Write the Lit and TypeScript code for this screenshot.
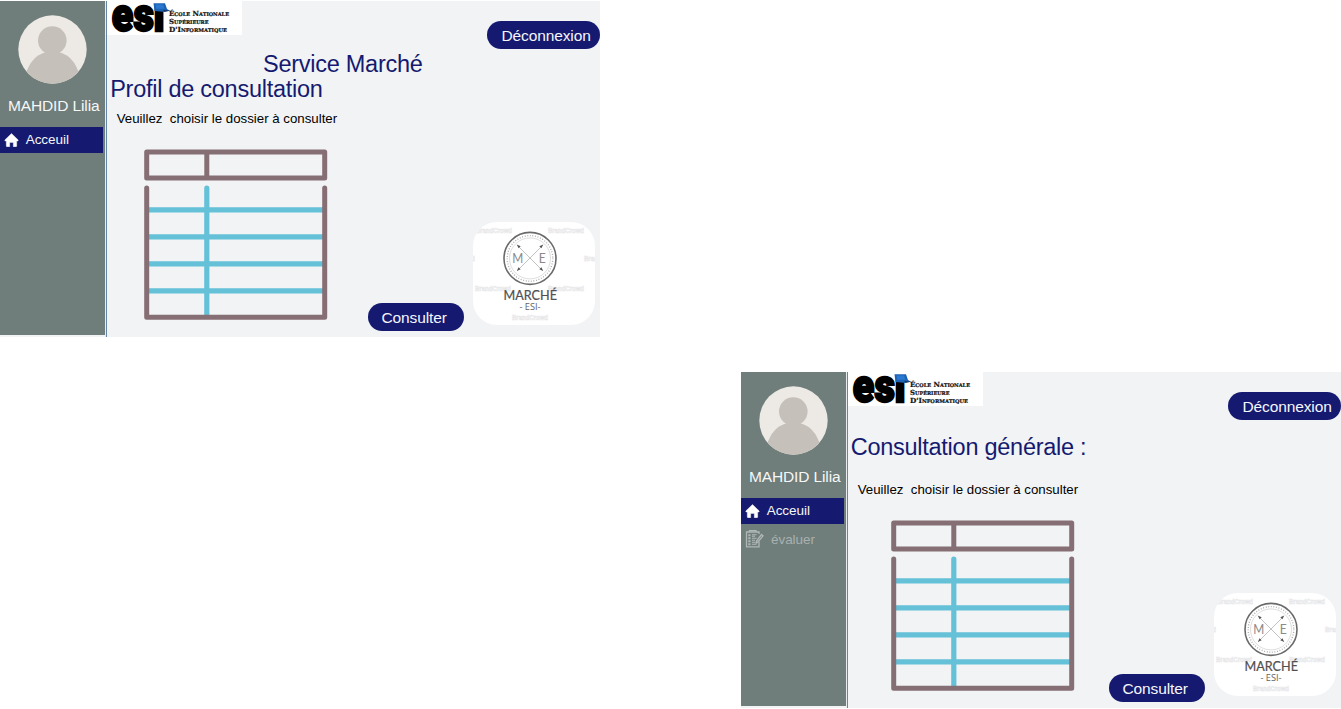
import { LitElement, html, css, svg, nothing } from "lit";
import { customElement, property } from "lit/decorators.js";

@customElement("esi-logo")
class EsiLogo extends LitElement {
  static styles = css`
    :host { display: block; width: 135px; height: 34.5px; background: #fff; }
    svg { display: block; }
    .big { font: 900 30px Roboto, "Liberation Sans", sans-serif; stroke: #000; stroke-width: 1.5; stroke-linejoin: miter; }
    .small { font: bold 7px "DejaVu Serif", "Liberation Serif", serif; font-variant: small-caps; fill: #111; stroke: #111; stroke-width: 0.2; }
  `;
  render() {
    return html`<svg width="135" height="34.5" viewBox="0 0 135 34.5">
      <g transform="translate(4.8 29.6) scale(1 1.56)">
        <text class="big" x="0" y="0" textLength="21.5" lengthAdjust="spacingAndGlyphs">e</text>
        <text class="big" x="21.7" y="0" textLength="20.5" lengthAdjust="spacingAndGlyphs">s</text>
        <text class="big" x="41.5" y="0" textLength="11.5" lengthAdjust="spacingAndGlyphs">ı</text>
      </g>
      <path d="M46.500 2.200h11.500l2 5.700 3 1.800-6.800 1.100-8.700-.900z" fill="#1c62b5" />
      <path d="M48.500 3.500h7.600l1.300 4.200h-8.200z" fill="#2a78cf" />
      <path d="M56.500 8.800l6.500.900-6.300 1.200z" fill="#143761" />
      <text class="small" x="62" y="15" textLength="60" lengthAdjust="spacingAndGlyphs">École Nationale</text>
      <text class="small" x="62" y="22.8" textLength="39.5" lengthAdjust="spacingAndGlyphs">Supérieure</text>
      <text class="small" x="62" y="30.6" textLength="58" lengthAdjust="spacingAndGlyphs">D'Informatique</text>
    </svg>`;
  }
}

@customElement("marche-logo")
class MarcheLogo extends LitElement {
  static styles = css`
    :host { display: block; width: 122px; height: 103.5px; border-radius: 24px; overflow: hidden; background: #fff; }
    svg { display: block; }
    text { font-family: Lato, "Open Sans", sans-serif; }
    .mark { font: bold 7px "Liberation Sans", sans-serif; fill: #fff; stroke: #e6e6e8; stroke-width: 0.6; }
    .letter { font-size: 12.5px; fill: #8a8a8a; }
    .name { font-size: 12.6px; fill: #505050; stroke: #505050; stroke-width: 0.2; }
    .sub { font: 8.8px "Open Sans", sans-serif; fill: #626262; }
  `;
  render() {
    const marks = [[3, 11.3], [75, 11.3], [-34, 39], [111, 39], [2, 69], [75, 69], [39, 97.5]];
    const heads = [[45.2, 23.8, 225], [68.8, 23.8, 315], [45.2, 47.6, 135], [68.8, 47.6, 45]];
    return html`<svg width="122" height="103.5" viewBox="0 0 122 103.5">
      ${marks.map(([x, y]) => svg`<text class="mark" x=${x} y=${y} textLength="36" lengthAdjust="spacingAndGlyphs">BrandCrowd</text>`)}
      <circle cx="57" cy="36.4" r="26" fill="#fff" stroke="#6a6a6a" stroke-width="1.6" />
      <circle cx="57" cy="36.4" r="22.8" fill="none" stroke="#aaa" stroke-width="1.4" stroke-dasharray="0.9 1.7" />
      <circle cx="57" cy="36.4" r="20.5" fill="none" stroke="#bdbdbd" stroke-width="0.5" />
      <path d="M44.5 23.5l25 25M69.5 23.5l-25 25" stroke="#b2b2b2" stroke-width="0.8" />
      ${heads.map(([x, y, a]) => svg`<path transform=${`translate(${x} ${y}) rotate(${a})`} d="M2-0L-2-1.5V1.5Z" fill="#555" />`)}
      <text class="letter" x="39.3" y="40.7" textLength="11" lengthAdjust="spacingAndGlyphs">M</text>
      <text class="letter" x="65.7" y="40.7" textLength="7" lengthAdjust="spacingAndGlyphs">E</text>
      <text class="name" x="30.5" y="78" textLength="53.5" lengthAdjust="spacing">MARCHÉ</text>
      <text class="sub" x="46.5" y="88.3" textLength="21" lengthAdjust="spacingAndGlyphs">- ESI-</text>
    </svg>`;
  }
}

@customElement("dossier-table")
class DossierTable extends LitElement {
  static styles = css`
    :host { display: block; }
    svg { display: block; }
    .frame { fill: none; stroke: #866f74; stroke-width: 5; stroke-linecap: round; stroke-linejoin: round; }
    .rule { fill: none; stroke: #65c1d7; stroke-width: 5.2; }
    .col { stroke-linecap: round; }
  `;
  render() {
    return html`<svg width="184" height="172" viewBox="0 0 184 172">
      ${[60.8, 87.8, 114.8, 141.8].map((y) => svg`<path class="rule" d="M4 ${y}H179" />`)}
      <path class="rule col" d="M62.8 39V166" />
      <path class="frame" d="M2.7 3H180.7V29H2.7ZM62.8 3V29" />
      <path class="frame" d="M2.7 39V168.3H180.7V39" />
    </svg>`;
  }
}

@customElement("service-screen")
class ServiceScreen extends LitElement {
  @property() service = "";
  @property() heading = "";
  @property({ type: Boolean }) evaluate = false;

  static styles = css`
    :host {
      display: flex; width: 600px; height: 336.3px; background: #f1f3f5; color: #000;
      font-family: "Liberation Sans", Arial, sans-serif; overflow: hidden;
    }
    .side {
      box-sizing: border-box; width: 104.7px; height: 334.3px; flex: none; background: #6f7d7b;
      padding-top: 14.7px; color: #f6f7f7;
    }
    .rail { flex: none; width: 2.3px; box-sizing: border-box; background: #e9ecef; border-right: 1.2px solid #6386a9; }
    .avatar { display: block; margin: 0 0 0 18px; }
    .user { margin-top: 12.7px; height: 18px; padding-left: 8px; font-size: 15.5px; letter-spacing: -0.13px; line-height: 18px; white-space: nowrap; }
    .nav { display: flex; flex-direction: column; gap: 3.2px; margin-top: 12.1px; }
    .item { display: flex; align-items: center; height: 25.4px; width: 103.3px; font-size: 13.5px; letter-spacing: -0.05px; box-sizing: border-box; }
    .item svg { flex: none; }
    .active { background: #151a70; padding-left: 4px; gap: 6.7px; }
    .muted { color: #a8b1af; padding-left: 4px; gap: 7px; }
    .main { flex: 1; min-width: 0; }
    .top { display: flex; justify-content: space-between; height: 51.1px; }
    .pill {
      box-sizing: border-box; height: 28.4px; border: 0; border-radius: 15px; background: #151a70; color: #f6f7fa;
      font: 15.5px/29.2px "Liberation Sans", Arial, sans-serif; letter-spacing: -0.12px; padding: 0; text-align: left; white-space: nowrap;
    }
    .logout { width: 113px; margin-top: 20.4px; padding-left: 14.5px; }
    .titles { height: 59.3px; color: #151a70; font-size: 23.5px; letter-spacing: -0.26px; line-height: 25.7px; }
    .titles.single { box-sizing: border-box; padding-top: 12.3px; }
    .service { padding-left: 156px; }
    .heading { padding-left: 3.2px; }
    .single .heading { padding-left: 2.7px; }
    .hint { height: 16px; padding-left: 9.7px; font-size: 13.27px; line-height: 16px; white-space: pre; }
    .body { display: grid; grid-template-columns: 261px 96px 9.5px 122px; margin-top: -0.7px; }
    .table { padding: 22.5px 0 0 37px; }
    .table.shifted { padding-left: 43px; }
    .consult { margin-top: 176.2px; padding-left: 13.5px; }
    .brand { grid-column: 4; margin-top: 95.4px; }
  `;

  render() {
    return html`
      <aside class="side">
        <svg class="avatar" width="69" height="69" viewBox="0 0 69 69">
          <defs><clipPath id="disc"><circle cx="34.5" cy="34.5" r="34.2" /></clipPath></defs>
          <circle cx="34.5" cy="34.5" r="34.2" fill="#edeae5" />
          <g clip-path="url(#disc)" fill="#c5c1ba">
            <circle cx="34.3" cy="25.500" r="14.300" />
            <path d="M7.500 60C11.500 46 20 36.500 34.500 36.500S57.500 46 61.500 60V69H7.500z" />
          </g>
        </svg>
        <div class="user">MAHDID Lilia</div>
        <nav class="nav">
          <div class="item active">
            <svg width="15" height="14" viewBox="0 0 15 14">
              <path d="M7.500.500L14.200 7Q14.400 8 13.500 8H12.700V13Q12.700 13.700 12 13.700H9.300V9.400H5.700V13.700H3Q2.300 13.700 2.300 13V8H1.500Q.600 8 .800 7Z" fill="#fff" stroke="#fff" stroke-width=".4" stroke-linejoin="round" />
            </svg>
            <span>Acceuil</span>
          </div>
          ${this.evaluate
            ? html`<div class="item muted">
                <svg width="19" height="18" viewBox="0 0 19 18" fill="none" stroke="#b0b8b6" stroke-width="1.3">
                  <path d="M14 4V2H1.500V16.800H14V11.500" />
                  <path d="M4.500 2V.700H11V2" />
                  <path d="M3.300 5.200h2.200M3.300 8.200h2.200M3.300 11.200h2.200M3.300 14.200h2.200" stroke-width="1.900" />
                  <path d="M7 4.700h4.500M7 6.200h3M7 8.200h4.500M7 10.200h3M7 12.200h3.500M7 14.200h4.500" stroke-width="1.100" />
                  <path d="M16.500 4.500L18 5.800 13 12 11.300 13 11.500 11Z" />
                </svg>
                <span>évaluer</span>
              </div>`
            : nothing}
        </nav>
      </aside>
      <div class="rail"></div>
      <main class="main">
        <div class="top">
          <esi-logo></esi-logo>
          <button class="pill logout">Déconnexion</button>
        </div>
        <div class="titles ${this.service ? "" : "single"}">
          ${this.service ? html`<div class="service">${this.service}</div>` : nothing}
          <div class="heading">${this.heading}</div>
        </div>
        <div class="hint">Veuillez  choisir le dossier à consulter</div>
        <div class="body">
          <dossier-table class="table ${this.evaluate ? "shifted" : ""}"></dossier-table>
          <button class="pill consult">Consulter</button>
          <marche-logo class="brand"></marche-logo>
        </div>
      </main>
    `;
  }
}

@customElement("app-root")
class AppRoot extends LitElement {
  static styles = css`
    :host {
      display: flex; flex-direction: column; justify-content: space-between; box-sizing: border-box;
      width: 1341px; height: 709px; padding: 0.7px 0 1px; background: #fff; overflow: hidden;
    }
    .second { align-self: flex-end; }
  `;
  render() {
    return html`
      <service-screen service="Service Marché" heading="Profil de consultation"></service-screen>
      <service-screen class="second" heading="Consultation générale :" evaluate></service-screen>
    `;
  }
}
